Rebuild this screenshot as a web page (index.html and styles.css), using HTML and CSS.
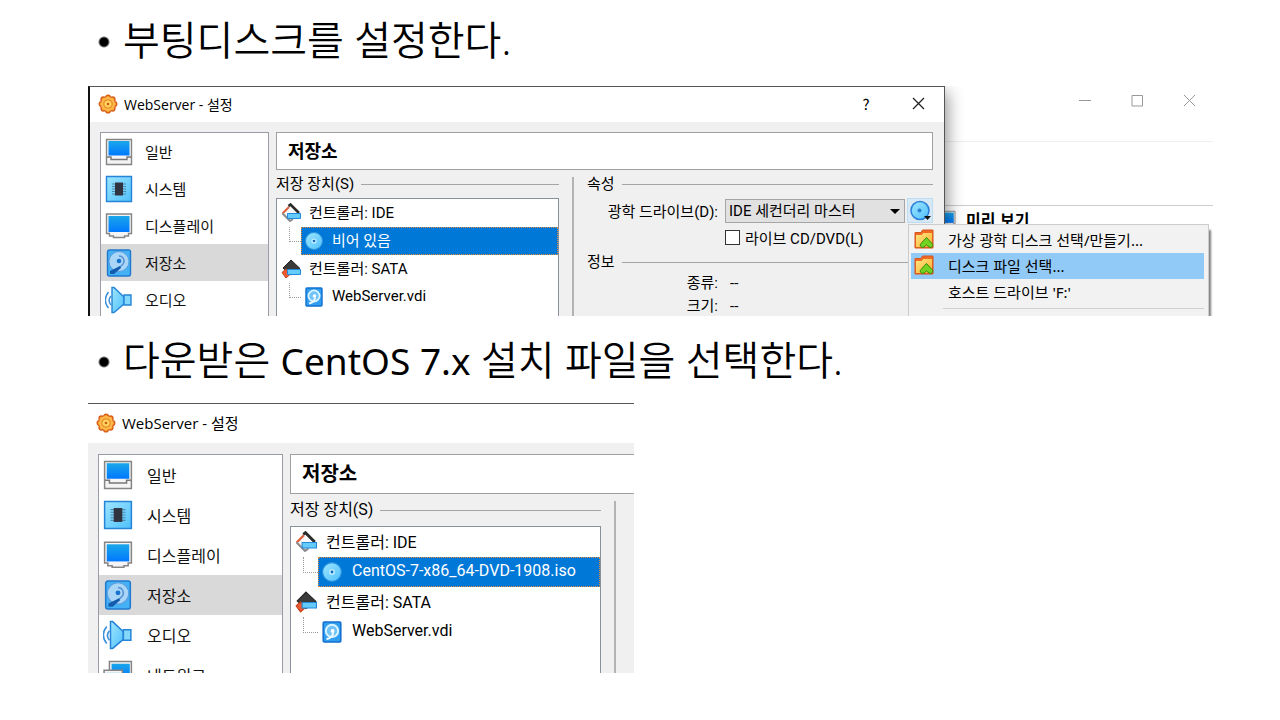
FILE: index.html
```html
<!DOCTYPE html>
<html lang="ko">
<head>
    <meta charset="UTF-8">
    <meta name="viewport" content="width=device-width, initial-scale=1.0">
    <title>부팅디스크 설정</title>
    <link rel="stylesheet" href="styles.css">
</head>
<body>
    <!-- Icon definitions -->
    <svg class="defs" aria-hidden="true">
        <defs>
            <linearGradient id="screen" x1="0" y1="0" x2="0" y2="1">
                <stop offset="0" stop-color="#1aa7ea"/><stop offset="1" stop-color="#0078ff"/>
            </linearGradient>
            <linearGradient id="sky" x1="0" y1="0" x2="1" y2="1">
                <stop offset="0" stop-color="#9ee6ff"/><stop offset="1" stop-color="#4fc0fb"/>
            </linearGradient>
            <linearGradient id="gold" x1="0" y1="0" x2="1" y2="1">
                <stop offset="0" stop-color="#ffe680"/><stop offset="1" stop-color="#fbb031"/>
            </linearGradient>
        </defs>
        <symbol id="i-gear" viewBox="0 0 20 20">
            <g fill="#f9a635" stroke="#d9601a" stroke-width="1.4">
                <circle cx="10" cy="3.6" r="2.4"/><circle cx="14.6" cy="5.4" r="2.4"/><circle cx="16.4" cy="10" r="2.4"/><circle cx="14.6" cy="14.6" r="2.4"/>
                <circle cx="10" cy="16.4" r="2.4"/><circle cx="5.4" cy="14.6" r="2.4"/><circle cx="3.6" cy="10" r="2.4"/><circle cx="5.4" cy="5.4" r="2.4"/>
            </g>
            <circle cx="10" cy="10" r="7" fill="#fdb94a"/>
            <circle cx="10" cy="10" r="4.2" fill="#ffd45e" stroke="#e98d2a" stroke-width="1.2"/>
            <circle cx="10" cy="10" r="1.3" fill="#c9581c"/>
        </symbol>
        <symbol id="i-general" viewBox="0 0 28 28">
            <path d="M1.5 1.5h25v25h-25z" fill="#f4f4f4" stroke="#858585" stroke-width="1.4"/>
            <path d="M3.5 3h21v14.5h-21z" fill="url(#screen)"/>
            <path d="M2 19h4v2.5h16V19h4" fill="none" stroke="#777" stroke-width="1.4"/>
        </symbol>
        <symbol id="i-system" viewBox="0 0 28 28">
            <path d="M1.5 1.5h25v25h-25z" fill="url(#sky)" stroke="#2584d8" stroke-width="1.4"/>
            <path d="M7 9h14M7 11.5h14M7 14h14M7 16.5h14M7 19h14" stroke="#4e87a8" stroke-width="1"/>
            <path d="M10 7.5h8v13h-8z" fill="#303440"/>
        </symbol>
        <symbol id="i-display" viewBox="0 0 28 28">
            <path d="M1.5 2h25v19.5h-3V24h-4v1.5h-11V24h-4v-2.5h-3z" fill="#f4f4f4" stroke="#858585" stroke-width="1.4"/>
            <path d="M3.5 4h21v16h-21z" fill="url(#screen)"/>
        </symbol>
        <symbol id="i-storage" viewBox="0 0 28 28">
            <rect x="2.5" y="1" width="23" height="26" rx="2" fill="#45b1f5" stroke="#2079cf" stroke-width="1.4"/>
            <circle cx="14" cy="12.5" r="10" fill="#a9d5f6" stroke="#5a9fe0"/>
            <path d="M14 7a5 5 0 0 1 4 8l-4 4" fill="none" stroke="#5793d5" stroke-width="1.4"/>
            <circle cx="14" cy="12" r="2.3" fill="#1873cf"/>
            <path d="M5 22l10-5 1 2-7 6H5z" fill="#135bad"/>
        </symbol>
        <symbol id="i-audio" viewBox="0 0 28 28">
            <path d="M3.5 6c-4 5-4 11 0 16M6 10c-2.5 3-2.5 6 0 9" fill="none" stroke="#3d91dc" stroke-width="1.5"/>
            <path d="M7 1.5h2l10 9.5v7L9 26.5H7z" fill="url(#sky)" stroke="#2584d8" stroke-width="1.4"/>
            <path d="M19 9h7v10h-7z" fill="#83d8fc" stroke="#2584d8" stroke-width="1.4"/>
        </symbol>
        <symbol id="i-network" viewBox="0 0 28 28">
            <path d="M6 1.5h20.5V18H6z" fill="#f4f4f4" stroke="#858585" stroke-width="1.4"/>
            <path d="M8 3.5h17V17H8z" fill="url(#screen)"/>
            <path d="M1 9.5h17V26H1z" fill="#f4f4f4" stroke="#858585" stroke-width="1.4"/>
            <path d="M3 12h13v12H3z" fill="url(#screen)"/>
        </symbol>
        <symbol id="i-ide" viewBox="0 0 20 20">
            <path d="M9 2l8.5 8.5L10 18 1.5 10.5z" fill="#f7f7f7" stroke="#aaa"/>
            <path d="M1.5 10.5L8 4" stroke="#e0603c" stroke-width="2"/>
            <path d="M7.5 3l2-1.500L18 10" fill="none" stroke="#2b2b2b" stroke-width="2.6"/>
            <path d="M1.5 10.5L9 18l3-2" fill="none" stroke="#8d8d8d" stroke-width="2"/>
            <path d="M6.5 10.5h13v5h-13z" fill="#65cbfb" stroke="#2489dc"/>
        </symbol>
        <symbol id="i-sata" viewBox="0 0 20 20">
            <path d="M10 1l9 8.5-9 6.5-8-7z" fill="#3a3a3a" stroke="#222"/>
            <path d="M1 13.5L5 10l5 4.5L5 19z" fill="#ef5a30" stroke="#c23f1c"/>
            <path d="M6.5 10.5h13v5h-13z" fill="#65cbfb" stroke="#2489dc"/>
        </symbol>
        <symbol id="i-cd" viewBox="0 0 20 20">
            <circle cx="10" cy="10" r="8.5" fill="url(#sky)" stroke="#2d93de"/>
            <circle cx="10" cy="10" r="2.6" fill="#c3efff"/>
            <circle cx="10" cy="10" r="1.3" fill="#1667b5"/>
        </symbol>
        <symbol id="i-vdi" viewBox="0 0 20 20">
            <rect x="2" y="1" width="16" height="18" rx="1" fill="#2f9df0" stroke="#136fd0" stroke-width="1.4"/>
            <circle cx="10" cy="9" r="5.6" fill="#6fc3f8" stroke="#d9f3ff" stroke-width="1.8"/>
            <circle cx="10.5" cy="9" r="1.8" fill="#fff"/>
            <path d="M11 10.5c0 3-2 5-6 6" fill="none" stroke="#e8f8ff" stroke-width="2"/>
        </symbol>
        <symbol id="i-disc-menu" viewBox="0 0 22 22">
            <circle cx="11" cy="10.5" r="9" fill="url(#sky)" stroke="#2b82da" stroke-width="1.6"/>
            <circle cx="10.5" cy="10.5" r="2" fill="#2c81cf"/>
            <path d="M15 16h7l-3.5 4z" fill="#111"/>
        </symbol>
        <symbol id="i-folder" viewBox="0 0 20 20">
            <path d="M1 3.5h6L8.5 1H19v18H1z" fill="#ee6a25" stroke="#d6551a"/>
            <path d="M2 6h5.5l2-2H18v14H2z" fill="url(#gold)"/>
            <path d="M12.5 8.5l5.500 6c2 2-.5 5-3 3.500l-2.500-2-2.500 2c-2.500 1.500-5-1.500-3-3.500z" fill="#72d321" stroke="#34870e" stroke-linejoin="round"/>
        </symbol>
    </svg>

    <main class="slide">
        <h2 class="step">부팅디스크를 설정한다.</h2>

        <section class="shot shot-wide">
            <div class="dialog">
                <header class="titlebar">
                    <svg class="app-icon"><use href="#i-gear"/></svg>
                    <span class="title">WebServer - 설정</span>
                    <button class="win-btn help" type="button">?</button>
                    <button class="win-btn" type="button" aria-label="닫기"><svg viewBox="0 0 13 13"><path d="M1 1l11 11M12 1L1 12"/></svg></button>
                </header>
                <div class="dialog-body">
                    <nav class="side">
                        <a href="#"><svg><use href="#i-general"/></svg>일반</a>
                        <a href="#"><svg><use href="#i-system"/></svg>시스템</a>
                        <a href="#"><svg><use href="#i-display"/></svg>디스플레이</a>
                        <a href="#" class="active"><svg><use href="#i-storage"/></svg>저장소</a>
                        <a href="#"><svg><use href="#i-audio"/></svg>오디오</a>
                    </nav>
                    <div class="content">
                        <h3 class="page-title">저장소</h3>
                        <div class="columns">
                            <div class="devices">
                                <h4 class="group-title">저장 장치(S)</h4>
                                <ul class="tree">
                                    <li><svg><use href="#i-ide"/></svg><span>컨트롤러: IDE</span></li>
                                    <li class="child"><div class="node selected"><svg><use href="#i-cd"/></svg><span>비어 있음</span></div></li>
                                    <li><svg><use href="#i-sata"/></svg><span>컨트롤러: SATA</span></li>
                                    <li class="child"><div class="node"><svg><use href="#i-vdi"/></svg><span>WebServer.vdi</span></div></li>
                                </ul>
                            </div>
                            <div class="attributes">
                                <h4 class="group-title">속성</h4>
                                <div class="form">
                                    <label for="drive">광학 드라이브(D):</label>
                                    <div class="drive-row">
                                        <div class="select-wrap">
                                            <select id="drive"><option>IDE 세컨더리 마스터</option></select>
                                        </div>
                                        <button class="disc-btn" type="button" aria-label="디스크 선택"><svg><use href="#i-disc-menu"/></svg></button>
                                    </div>
                                    <div class="check-row">
                                        <input type="checkbox" id="live"><label for="live">라이브 CD/DVD(L)</label>
                                    </div>
                                </div>
                                <h4 class="group-title">정보</h4>
                                <dl class="info">
                                    <dt>종류:</dt><dd>--</dd>
                                    <dt>크기:</dt><dd>--</dd>
                                </dl>
                            </div>
                        </div>
                    </div>
                </div>
            </div>

            <div class="manager">
                <div class="manager-bar">
                    <button type="button" aria-label="최소화"><svg viewBox="0 0 13 13"><path d="M0 6.5h12"/></svg></button>
                    <button type="button" aria-label="최대화"><svg viewBox="0 0 13 13"><path d="M1 1.5h10.500v10.500H1z"/></svg></button>
                    <button type="button" aria-label="닫기"><svg viewBox="0 0 13 13"><path d="M1 1l11 11M12 1L1 12"/></svg></button>
                </div>
                <div class="manager-tools"></div>
                <div class="preview"><svg><use href="#i-display"/></svg>미리 보기</div>
            </div>

            <div class="menu" role="menu">
                <button type="button" role="menuitem"><svg><use href="#i-folder"/></svg>가상 광학 디스크 선택/만들기...</button>
                <button type="button" role="menuitem" class="hover"><svg><use href="#i-folder"/></svg>디스크 파일 선택...</button>
                <button type="button" role="menuitem" class="no-icon">호스트 드라이브 'F:'</button>
                <hr>
            </div>
        </section>

        <h2 class="step">다운받은 <span class="latin">CentOS 7.x</span> 설치 파일을 선택한다.</h2>

        <section class="shot shot-large">
            <div class="dialog">
                <header class="titlebar">
                    <svg class="app-icon"><use href="#i-gear"/></svg>
                    <span class="title">WebServer - 설정</span>
                </header>
                <div class="dialog-body">
                    <nav class="side">
                        <a href="#"><svg><use href="#i-general"/></svg>일반</a>
                        <a href="#"><svg><use href="#i-system"/></svg>시스템</a>
                        <a href="#"><svg><use href="#i-display"/></svg>디스플레이</a>
                        <a href="#" class="active"><svg><use href="#i-storage"/></svg>저장소</a>
                        <a href="#"><svg><use href="#i-audio"/></svg>오디오</a>
                        <a href="#"><svg><use href="#i-network"/></svg>네트워크</a>
                    </nav>
                    <div class="content">
                        <h3 class="page-title">저장소</h3>
                        <div class="columns">
                            <div class="devices">
                                <h4 class="group-title">저장 장치(S)</h4>
                                <ul class="tree">
                                    <li><svg><use href="#i-ide"/></svg><span>컨트롤러: IDE</span></li>
                                    <li class="child"><div class="node selected"><svg><use href="#i-cd"/></svg><span>CentOS-7-x86_64-DVD-1908.iso</span></div></li>
                                    <li><svg><use href="#i-sata"/></svg><span>컨트롤러: SATA</span></li>
                                    <li class="child"><div class="node"><svg><use href="#i-vdi"/></svg><span>WebServer.vdi</span></div></li>
                                </ul>
                            </div>
                            <div class="attributes"></div>
                        </div>
                    </div>
                </div>
            </div>
        </section>
    </main>
</body>
</html>
```

FILE: styles.css
```css
* {
    box-sizing: border-box;
}
body {
    margin: 0;
    background: #fff;
    color: #000;
    font-family: "Noto Sans CJK KR", sans-serif;
}
h2, h3, h4, ul, dl, dd {
    margin: 0;
    padding: 0;
}
button, select, input {
    font: inherit;
    color: inherit;
    margin: 0;
}
.defs {
    position: absolute;
    width: 0;
    height: 0;
}
.slide {
    padding: 0 67px 0 88px;
}

/* Bullet lines */
.step {
    display: flow-root;
    padding: 10px 0 13px 35px;
    font-family: "Noto Sans", "Noto Sans CJK KR", sans-serif;
    font-size: 40px;
    font-weight: 350;
    line-height: 60px;
    background: radial-gradient(circle at 16px 42px, #000 4px, transparent 6px);
}
.step .latin {
    font-size: 37px;
    font-weight: 400;
    line-height: 1;
}

/* Cropped windows */
.shot {
    --nav: 169px;
    --nav-row: 37px;
    --nav-icon: 28px;
    --nav-gap: 12px;
    --nav-text: 15px;
    --text: 15px;
    --title: 38px;
    --head: 14px;
    --tree-row: 28px;
    --tree-icon: 20px;
    --tree-gap: 8px;
    --indent: 23px;
    position: relative;
    display: grid;
    overflow: hidden;
}
.shot-wide {
    grid-template-columns: minmax(0, 857px) minmax(0, 1fr);
    aspect-ratio: 1125 / 230;
    margin: 3px 0 4px;
}
.shot-large {
    --nav: 185px;
    --nav-row: 40px;
    --nav-icon: 30px;
    --nav-gap: 14px;
    --nav-text: 16px;
    --text: 16px;
    --title: 40px;
    --head: 18px;
    --tree-row: 30px;
    --tree-icon: 22px;
    --tree-gap: 9px;
    --indent: 26px;
    max-width: 546px;
    aspect-ratio: 546 / 270;
}
.dialog {
    display: flex;
    flex-direction: column;
    min-height: 0;
    background: #f0f0f0;
    border-top: 1px solid #555;
}
.shot-wide .dialog {
    position: relative;
    border-left: 2px solid #111;
    border-right: 1px solid #555;
    box-shadow: 2px 6px 16px rgba(0, 0, 0, 0.45);
}
.titlebar {
    display: flex;
    align-items: center;
    flex: none;
    height: 35px;
    padding: 0 0 2px 8px;
    background: #fff;
    font-size: 14px;
}
.shot-large .titlebar {
    height: 39px;
    font-size: 15px;
}
.app-icon {
    width: 20px;
    height: 20px;
    margin-right: 6px;
}
.title {
    flex: 1;
    font-family: "Open Sans", "Noto Sans CJK KR", sans-serif;
}
.win-btn {
    width: 52px;
    height: 33px;
    padding: 0;
    border: 0;
    background: none;
}
.win-btn svg {
    display: block;
    width: 13px;
    height: 13px;
    margin: 0 auto;
    stroke: #222;
    stroke-width: 1.3;
    fill: none;
}
.win-btn.help {
    font-size: 15px;
}
.dialog-body {
    flex: 1;
    display: flex;
    gap: 7px;
    min-height: 0;
    padding: 10px 11px 0 10px;
}
.shot-large .dialog-body {
    padding-top: 11px;
    padding-right: 0;
}

/* Category list */
.side {
    flex: none;
    width: var(--nav);
    background: #fff;
    border: 1px solid #979ca5;
    border-bottom: 0;
    overflow: hidden;
}
.side a {
    display: flex;
    align-items: center;
    gap: var(--nav-gap);
    height: var(--nav-row);
    padding-left: 4px;
    color: #111;
    font-size: var(--nav-text);
    text-decoration: none;
}
.side a.active {
    background: #d9d9d9;
}
.side svg {
    width: var(--nav-icon);
    height: var(--nav-icon);
}

/* Storage page */
.content {
    flex: 1;
    min-width: 0;
    display: flex;
    flex-direction: column;
    font-family: Roboto, "Noto Sans CJK KR", sans-serif;
    font-size: var(--text);
}
.page-title {
    flex: none;
    height: var(--title);
    padding-left: 11px;
    background: #fff;
    border: 1px solid #a0a0a0;
    font-size: 18px;
    line-height: 38px;
}
.shot-large .page-title {
    border-right: 0;
    font-size: 20px;
}
.columns {
    flex: 1;
    display: flex;
    min-height: 0;
    padding-top: 7px;
}
.devices {
    flex: none;
    display: flex;
    flex-direction: column;
    width: 283px;
}
.shot-large .devices {
    width: 311px;
}
.group-title {
    display: flex;
    align-items: center;
    gap: 7px;
    flex: none;
    height: var(--head);
    font-size: var(--text);
    font-weight: 400;
    line-height: var(--head);
}
.group-title::after {
    content: "";
    flex: 1;
    height: 1px;
    background: #a5a5a5;
}
.tree {
    flex: 1;
    min-height: 0;
    margin-top: 7px;
    background: #fff;
    border: 1px solid #8a919c;
    border-bottom: 0;
    list-style: none;
    overflow: hidden;
}
.tree li {
    display: flex;
    align-items: center;
    gap: var(--tree-gap);
    height: var(--tree-row);
    padding-left: 4px;
}
.tree li span {
    padding-bottom: 3px;
}
.tree svg {
    width: var(--tree-icon);
    height: var(--tree-icon);
}
.tree .child {
    gap: 0;
    padding-left: 12px;
}
.tree .child::before {
    content: "";
    align-self: flex-start;
    width: calc(var(--indent) - 12px);
    height: 50%;
    border-left: 1px dotted #999;
    border-bottom: 1px dotted #999;
}
.node {
    flex: 1;
    display: flex;
    align-items: center;
    gap: var(--tree-gap);
    height: 100%;
    padding-left: 2px;
    border: 1px solid transparent;
}
.node.selected {
    background: #0078d7;
    border: 1px dotted #e08a3c;
    color: #fff;
}
.attributes {
    flex: 1;
    min-width: 0;
    margin-left: 13px;
    padding-left: 13px;
    border-left: 2px solid #b3b3b3;
}
.form {
    display: grid;
    grid-template-columns: 131px minmax(0, 1fr);
    column-gap: 7px;
    align-items: center;
    padding: 7px 0 3px;
}
.form > label, .info dt {
    text-align: right;
}
.drive-row {
    display: flex;
    gap: 2px;
    height: 25px;
    align-items: center;
}
.select-wrap {
    position: relative;
    flex: 1;
}
.select-wrap select {
    display: block;
    width: 100%;
    height: 24px;
    padding: 0 20px 0 3px;
    appearance: none;
    background: #e1e1e1;
    border: 1px solid #a5a5a5;
    border-radius: 0;
}
.select-wrap::after {
    content: "";
    position: absolute;
    top: 10px;
    right: 5px;
    border: 5px solid transparent;
    border-top-color: #000;
    border-bottom: 0;
    pointer-events: none;
}
.disc-btn {
    width: 26px;
    height: 25px;
    padding: 1px;
    background: #d8e8f5;
    border: 1px solid #bcdcf4;
}
.disc-btn svg {
    display: block;
    width: 22px;
    height: 22px;
}
.check-row {
    grid-column: 2;
    display: flex;
    align-items: center;
    gap: 5px;
    height: 29px;
}
.check-row input {
    width: 15px;
    height: 15px;
    appearance: none;
    background: #fff;
    border: 1px solid #333;
}
.info {
    display: grid;
    grid-template-columns: 131px 1fr;
    column-gap: 12px;
    padding-top: 3px;
    line-height: 23px;
}

/* Manager window behind the dialog */
.manager-bar {
    display: flex;
    justify-content: flex-end;
    gap: 8px;
    height: 56px;
    padding-right: 2px;
    border-bottom: 1px solid #eee;
}
.manager-bar button {
    width: 44px;
    height: 28px;
    padding: 0;
    background: none;
    border: 0;
}
.manager-bar svg {
    display: block;
    width: 13px;
    height: 13px;
    margin: 0 auto;
    stroke: #999;
    fill: none;
}
.manager-tools {
    height: 64px;
    border-bottom: 1px solid #ccc;
}
.preview {
    display: flex;
    align-items: center;
    gap: 10px;
    height: 25px;
    font-size: 16px;
    font-weight: 700;
}
.preview svg {
    width: 18px;
    height: 18px;
    margin-left: -7px;
}

/* Disc drop-down menu */
.menu {
    position: absolute;
    top: 138px;
    left: 820px;
    width: 301px;
    padding: 2px 4px 20px 2px;
    background: #f2f2f2;
    border: 1px solid #ccc;
    box-shadow: 2px 6px 2px rgba(0, 0, 0, 0.5);
    font-family: "Noto Sans", "Noto Sans CJK KR", sans-serif;
    font-size: 15px;
}
.menu button {
    display: flex;
    align-items: center;
    gap: 14px;
    width: 100%;
    height: 26px;
    padding: 0 0 2px 3px;
    background: none;
    border: 0;
    white-space: nowrap;
}
.menu button.hover {
    background: #91c9f7;
}
.menu button.no-icon {
    padding-left: 37px;
}
.menu svg {
    width: 20px;
    height: 20px;
}
.menu hr {
    margin: 3px 0 0 32px;
    border: 0;
    border-top: 1px solid #d0d0d0;
}
```
